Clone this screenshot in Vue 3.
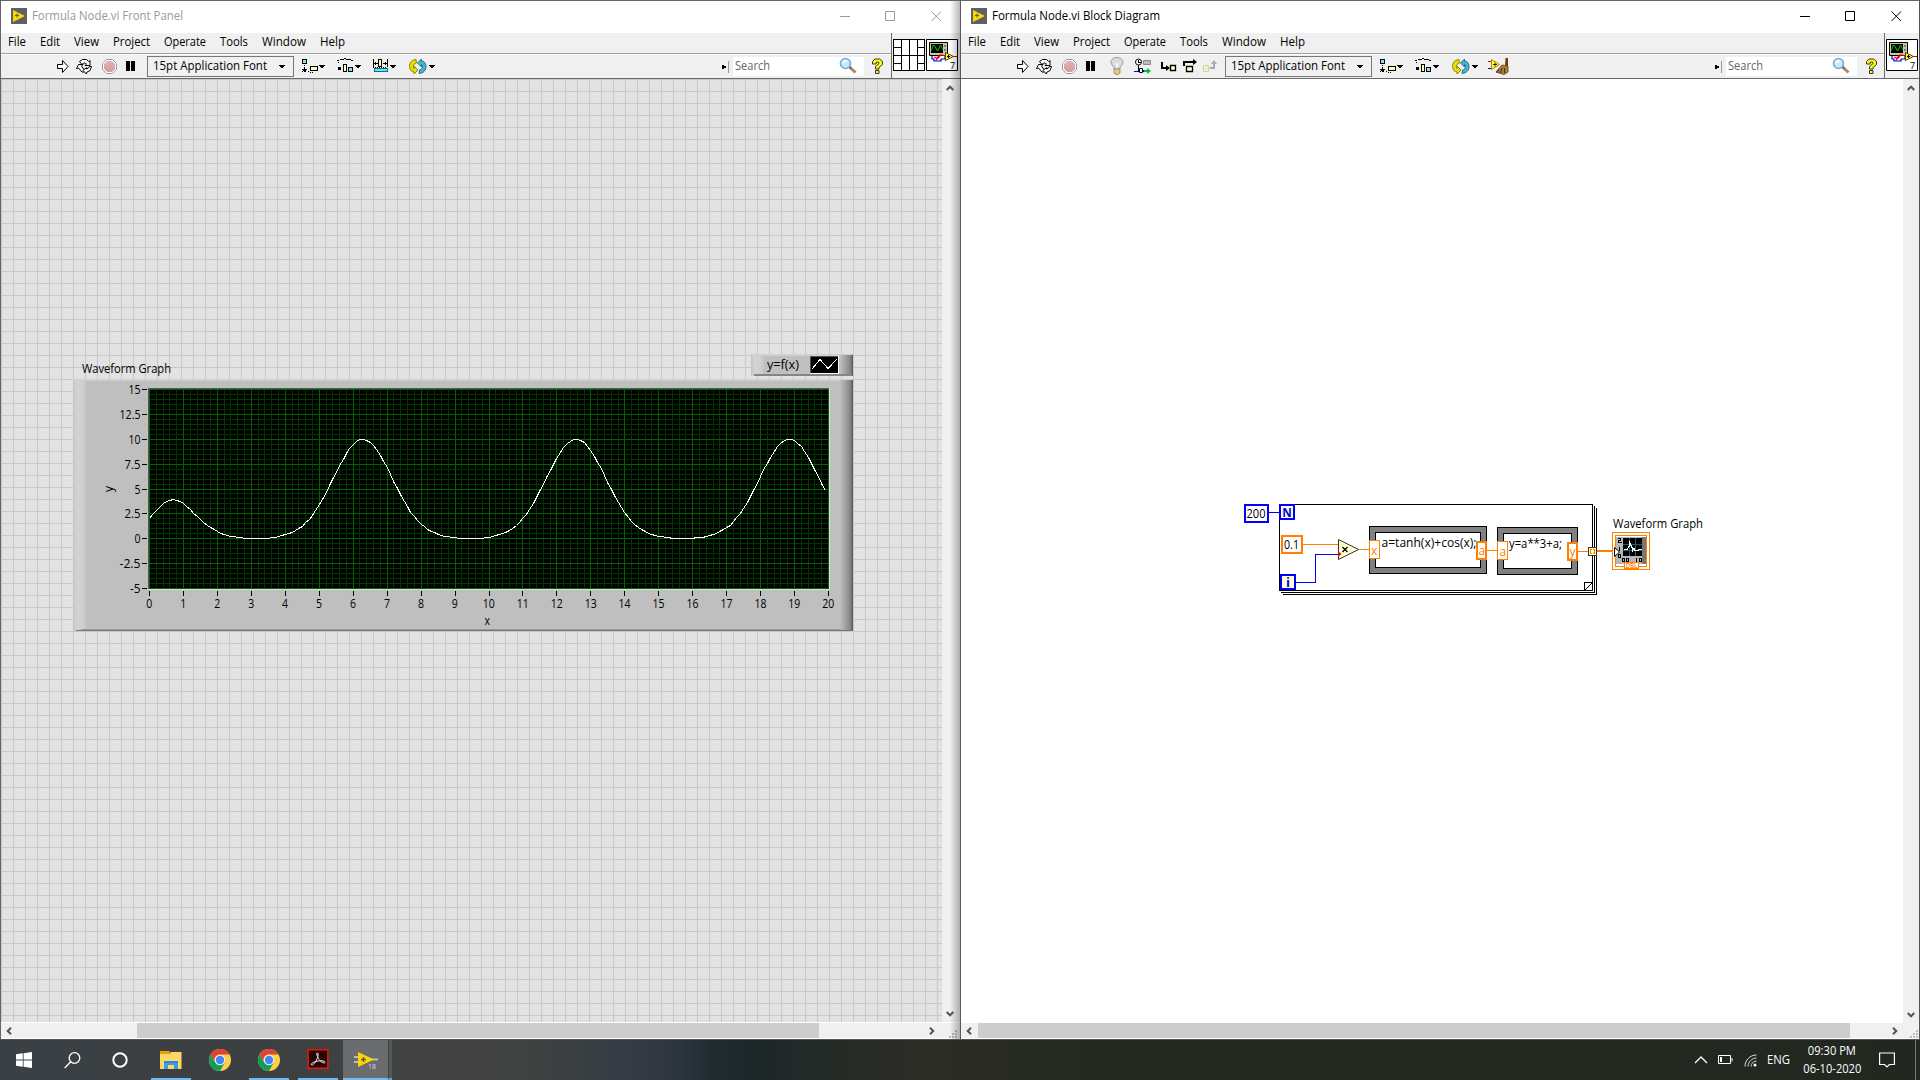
<script setup>
const menus = [['File', 18], ['Edit', 20], ['View', 25], ['Project', 37], ['Operate', 42], ['Tools', 28], ['Window', 44], ['Help', 25]]

// Condenses a label so that it takes the given width
const vFit = {
  mounted(el, { value }) {
    const range = document.createRange()
    range.selectNodeContents(el)
    const natural = range.getBoundingClientRect().width
    el.style.transform = `scaleX(${value / natural})`
  },
}

// Toolbar entries: [symbol, left edge, width]
const run = [['run', 56, 13], ['loop', 76, 16], ['stop', 102, 15], ['pause', 126, 10]]
const debug = [['bulb', 150, 14], ['retain', 174, 17], ['into', 200, 17], ['over', 222, 16], ['out', 243, 15]]
const bars = {
  front: [...run, ['font', 147, 147], ['align', 301, 25], ['dist', 337, 25], ['resize', 372, 25], ['order', 409, 26]],
  block: [...run, ...debug, ['font', 265, 147], ['align', 419, 25], ['dist', 455, 25], ['order', 492, 26], ['clean', 528, 22]],
}
const place = (list) => {
  let end = 1
  return list.map(([id, x, w]) => {
    const item = { id, w, gap: x - end }
    end = x + w
    return item
  })
}
const wins = [
  { key: 'front', title: 'Formula Node.vi Front Panel', tw: 151, tools: place(bars.front) },
  { key: 'block', title: 'Formula Node.vi Block Diagram', tw: 168, tools: place(bars.block) },
]

const px = (v) => 149 + 33.95 * v
const py = (v) => 588 - (v + 5) * 9.95
const xMinor = Array.from({ length: 101 }, (_, i) => ({ x: Math.round(px(i / 5)), major: i % 5 === 0 }))
const yMinor = Array.from({ length: 41 }, (_, i) => ({ y: Math.round(py(-5 + i / 2)), major: i % 5 === 0 }))
const xTicks = Array.from({ length: 21 }, (_, i) => i)
const yTicks = [15, 12.5, 10, 7.5, 5, 2.5, 0, -2.5, -5]
const curve = Array.from({ length: 200 }, (_, i) => {
  const x = i / 10
  const a = Math.tanh(x) + Math.cos(x)
  return `${Math.round(px(x)) + 0.5},${Math.round(py(a ** 3 + a)) + 0.5}`
}).join(' ')

const apps = [['folder', true], ['chrome', false], ['chrome', true], ['acrobat', true]]
</script>

<template>
  <svg class="defs" width="0" height="0">
    <defs>
      <linearGradient id="stopg" x2="0" y2="1"><stop stop-color="#e0b4b4" /><stop offset="1" stop-color="#d99a9a" /></linearGradient>
      <linearGradient id="edgeL"><stop stop-color="#c4c4c4" /><stop offset=".25" stop-color="#d2d2d2" /><stop offset=".7" stop-color="#d0d0d0" /><stop offset="1" stop-color="#bfbfbf" /></linearGradient>
      <linearGradient id="edgeR"><stop stop-color="#bfbfbf" /><stop offset=".8" stop-color="#858585" /><stop offset="1" stop-color="#555" /></linearGradient>
      <symbol id="caret" viewBox="0 0 7 4"><path d="M0 0h6v1H0zM1 1h4v1H1zM2 2h2v1H2z" shape-rendering="crispEdges" /></symbol>
      <symbol id="run" viewBox="0 0 13 22"><path d="M1.500 9.500h5v-4l5.500 6-5.500 6v-4h-5z" fill="#fff" stroke="#000" /></symbol>
      <symbol id="loop" viewBox="0 0 16 22">
        <g fill="#fff" stroke="#000" stroke-width="1">
          <path d="M3.500 6.500l3-2h4l2 2 1.500-1v5h-5l1.500-1.500-1-1h-2l-1.500 1.500z" />
          <path d="M2.500 9.500h4.500l-1.500 1.500 2 3 2 .5-1 2.500h-2.500l-3.500-4-2 .5z" />
          <path d="M13.500 11.500h2l-1.500 4-3.500 2v1.500l-3.500-3.500 3.500-3v1.500l2-1z" />
        </g>
      </symbol>
      <symbol id="stop" viewBox="0 0 15 22"><path d="M4.500 4.500h6l4 4v6l-4 4h-6l-4-4v-6z" fill="#fff" stroke="#999" /><path d="M5 6h5l3 3v5l-3 3H5l-3-3V9z" fill="url(#stopg)" /></symbol>
      <symbol id="pause" viewBox="0 0 10 22"><path d="M0 6h4v10H0zM5 6h4v10H5z" /></symbol>
      <symbol id="align" viewBox="0 0 25 22">
        <g shape-rendering="crispEdges"><path d="M1.500 4.500h4v4h-4z" fill="#8df" stroke="#000" /><path d="M9.500 11.500h7v4h-7z" fill="#ffb" stroke="#000" /><path d="M3 10h1v1H3zM3 12h1v2H3zM1 14h5v1H1zM2 15h3v1H2zM1 17h1v-1H1zM3 17h2v-1H3zM7 17h1v-1H7zM9 18h1v-1H9zM11 18h1v-1h-1z" /></g>
        <use href="#caret" x="18" y="10" width="7" height="4" />
      </symbol>
      <symbol id="dist" viewBox="0 0 25 22">
        <g shape-rendering="crispEdges"><path d="M6.500 9.500h3v7h-3z" fill="#ffb" stroke="#000" /><path d="M11.500 12.500h4v4h-4z" fill="#8df" stroke="#000" /><path d="M1 12h3v3H1zM0 6h2V5H0zM3 5h4V4H3zM7 4h2V3H7zM9 5h5V4H9zM14 6h2V5h-2zM1 7h1v1H1z" /></g>
        <use href="#caret" x="18" y="10" width="7" height="4" />
      </symbol>
      <symbol id="resize" viewBox="0 0 25 22">
        <g shape-rendering="crispEdges"><path d="M6.500 4.500h3v7h-3z" fill="#ffb" stroke="#000" /><path d="M2.500 13.500h13v3h-13z" fill="#7de" stroke="#078" /><path d="M1 5h1v7H1zM15 5h1v7h-1zM2 8h4v1H2zM3 7h1v3H3zM11 8h4v1h-4zM13 7h1v3h-1zM1 13h1v-1H1zM3 13h1v-1H3zM5 13h1v-1H5zM7 13h1v-1H7zM9 13h1v-1H9zM11 13h1v-1h-1zM13 13h1v-1h-1zM1 4h1v1H1zM15 4h1v1h-1z" /></g>
        <use href="#caret" x="18" y="10" width="7" height="4" />
      </symbol>
      <symbol id="order" viewBox="0 0 26 22">
        <path d="M7 4.500C2 5 .5 8 .5 11.500S3 17 5 17v2l4-4-4-4v2.500C4 13 3.500 9 7.500 8z" fill="#e6dc10" stroke="#867a00" stroke-width=".9" />
        <path d="M10 18.500c5-.5 7-3.500 7-7S15 6 12.500 6V4L8.500 8l4 4V9.500c1.500.5 2 4.500-2 5.500z" fill="#48b4d0" stroke="#1a6a80" stroke-width=".9" />
        <use href="#caret" x="20" y="10" width="7" height="4" />
      </symbol>
      <symbol id="bulb" viewBox="0 0 14 22"><path d="M4 14v-2C-2 7 2 2.500 7 2.500S16 7 10 12v2z" fill="#dcdcdc" stroke="#999" /><path d="M5 8l2 2 2-2M7 10v4" stroke="#fff" fill="none" /><path d="M4 14h6v4l-2 1.500H6L4 18z" fill="#e7c97d" stroke="#8b8468" stroke-width=".8" /></symbol>
      <symbol id="retain" viewBox="0 0 17 22">
        <circle cx="4.500" cy="7" r="3" fill="#fff" stroke="#000" /><path d="M4 5h1v2h2v1H4zM4 10h1v6H4zM1 16h4v1H1z" /><path d="M9.500 5.500h7v4h-7z" fill="#bbb" stroke="#888" /><path d="M0 16h4v1H0zM8 15h3v2H8z" fill="#00f" /><path d="M5.500 13.500h3v4h-3z" fill="#fff" stroke="#000" /><path d="M10 15h3v-2l4 3-4 3v-2h-3z" fill="#0b3" />
      </symbol>
      <symbol id="into" viewBox="0 0 17 22"><path d="M1 7h2v5h3v-2l4 3-4 3v-2H1z" /><path d="M10.500 10.500h5v5h-5z" fill="#ffb" stroke="#000" stroke-width="1.300" /></symbol>
      <symbol id="over" viewBox="0 0 16 22"><path d="M1 6h10V4l4 3-4 3V8H3v3H1z" /><path d="M4.500 11.500h6v5h-6z" fill="#ffb" stroke="#000" stroke-width="1.300" /></symbol>
      <symbol id="out" viewBox="0 0 15 22"><path d="M7 14h5V9h2l-3-4-3 4h2v3H7z" fill="#aaa" /><path d="M.5 10.500h5v6h-5z" fill="#f1efc6" stroke="#d4d1a2" /></symbol>
      <symbol id="clean" viewBox="0 0 22 22"><path d="M0 6h4v1H0z" fill="#e00" /><path d="M0 13h4v1H0z" fill="#00d" /><path d="M3.500 4.500v10l8-5z" fill="#ff3" stroke="#a80" /><path d="M5 9.500h4M7 7.500v4" stroke="#420" /><path d="M17.500 3h2.500v8h-3z" fill="#6b3a10" /><path d="M14 10l6 1v6l-4 2.500-8-2.500z" fill="#a8803c" stroke="#5b3c18" stroke-width=".8" /><path d="M11 14l-2 4M14 13l-1.500 5M16.500 13v5" stroke="#4a2c10" /></symbol>
      <symbol id="glass" viewBox="0 0 18 18"><path d="M10 9.500l6.500 6" stroke="#b5855c" stroke-width="3" /><path d="M10 9.500l2 2" stroke="#667" stroke-width="2" /><circle cx="6.500" cy="6.500" r="5" fill="#c5ecfa" stroke="#7ba9da" stroke-width="1.600" /><path d="M4 6q1-3 4-2" fill="none" stroke="#fff" stroke-width="1.500" /></symbol>
      <symbol id="help" viewBox="0 0 13 17"><path d="M1.500 6V3.500L4 1h4.500l3 2.500v3L8 9.500v1.500H4.500V8.500L8 5.500V4.500L7 4H5.500L5 6z" fill="#ff0" stroke="#333" /><path d="M4.500 12.500h3.500v3H4.500z" fill="#ff0" stroke="#333" /></symbol>
      <symbol id="vi" viewBox="0 0 32 32">
        <path d="M.5 .5h31v31H.5z" fill="#fff" stroke="#000" />
        <path d="M3.500 3.500h18v13h-18z" fill="#c9c6a3" stroke="#000" /><path d="M5 5h12v9H5z" /><path d="M5.500 11.500l1.500-5h1.500l2.500 5h1l2-5h1l1.500 4" fill="none" stroke="#0c0" /><path d="M18 6h2v2h-2zM18 10h2v2h-2z" fill="#877" />
        <path d="M6 17v3h2v2h7v-2h4v-3" fill="none" stroke="#00c" stroke-width="1.200" /><path d="M8 18l3 1 3-3 7 1M10 21l4-4M25 17.500h6" fill="none" stroke="#e00" stroke-width="1.200" />
        <path d="M19.500 13.500v8l8-4z" fill="#ff0" stroke="#542" /><path d="M21 17.500h3M22.500 16v3" stroke="#000" />
        <text x="24" y="30" font-size="9">7</text>
      </symbol>
      <symbol id="chrome" viewBox="0 0 24 24">
        <circle cx="12" cy="12" r="11" fill="#ffce44" /><path d="M2.500 6.500A11 11 0 0 0 12 23l4.700-8.300L12 12l-4.700 2.700z" fill="#0f9d58" /><path d="M2.500 6.500A11 11 0 0 1 21.600 6.500H12A5.500 5.500 0 0 0 7 14.500z" fill="#db4437" /><circle cx="12" cy="12" r="5.200" fill="#f1f1f1" /><circle cx="12" cy="12" r="4.200" fill="#4285f4" />
      </symbol>
      <symbol id="folder" viewBox="0 0 24 24"><path d="M1 3h9l2 2h-1v3H1z" fill="#e8a200" /><path d="M1 6h10l1-2h10.500v17H1z" fill="#ffd766" /><path d="M5 21v-8h14v8h-4v-4H9v4z" fill="#3d9be0" /><path d="M5 13h14v2H5z" fill="#2d86cf" /></symbol>
      <symbol id="acrobat" viewBox="0 0 24 24"><path d="M2.200 1.700h19.600v18.600H2.200z" fill="#2a0505" stroke="#e8190b" stroke-width="1.400" /><path d="M11 5c2-.5 1 4-.5 7-1.500 3.500-4 5.500-5 5-1.500-1.500 3-3.500 7-4s7 0 6.500 1.500c-1 1.500-5-1-6.500-4S10 5.300 11 5z" fill="none" stroke="#f0eaea" stroke-width="1" /></symbol>
    </defs>
  </svg>

  <div class="screen">
    <main class="desk">
      <section v-for="w in wins" :key="w.key" class="win" :class="w.key">
        <header class="title">
          <svg class="logo" width="16" height="16"><path d="M0 0h16v16H0z" fill="#5d6066" /><path d="M2 2l12 6-12 6z" fill="#ffd500" /><path d="M4 7.500h4M6 5.500v4" stroke="#555" /></svg>
          <span v-fit="w.tw">{{ w.title }}</span>
          <svg class="ctl" width="102" height="12" fill="none" stroke="currentColor"><path d="M0 6.500h10M45.500 1.500h9v9h-9zM91.500 1.500l9.500 9.500M101 1.500l-9.500 9.500" /></svg>
        </header>
        <div class="head">
          <div class="lines">
            <nav class="menu"><span v-for="m in menus" :key="m[0]" v-fit="m[1]" :style="{ width: m[1] + 'px' }">{{ m[0] }}</span></nav>
            <div class="tools">
              <template v-for="t in w.tools" :key="t.id">
                <div v-if="t.id === 'font'" class="font" :style="{ marginLeft: t.gap + 'px' }">
                  <span v-fit="114">15pt Application Font</span><svg width="7" height="4"><use href="#caret" /></svg>
                </div>
                <svg v-else class="ic" :width="t.w" height="22" :style="{ marginLeft: t.gap + 'px' }"><use :href="'#' + t.id" /></svg>
              </template>
              <svg class="grip" width="8" height="12"><path d="M0 4h2v1h2v2H2v1H0z" /><path d="M6.500 0v12" stroke="#999" /></svg>
              <div class="search"><span v-fit="35">Search</span><svg width="18" height="18"><use href="#glass" /></svg></div>
              <svg class="q" width="13" height="17"><use href="#help" /></svg>
            </div>
          </div>
          <div class="panes">
            <svg v-if="w.key === 'front'" width="32" height="32" shape-rendering="crispEdges"><path d="M.5 .5h31v31H.5zM8.500 0v32M16.500 0v32M24.500 0v32M0 16.500h32M0 8.500h8M24 8.500h8M0 24.500h8M24 24.500h8" fill="#fff" stroke="#000" /></svg>
            <svg width="32" height="32"><use href="#vi" /></svg>
          </div>
        </div>
        <div class="body">
          <div class="canvas">
            <svg v-if="w.key === 'front'" class="art" width="941" height="943" viewBox="1 79 941 943">
              <text x="82" y="372.500" textLength="89" lengthAdjust="spacingAndGlyphs">Waveform Graph</text>
              <g shape-rendering="crispEdges">
                <path d="M751 354h102v22H751z" fill="#bfbfbf" /><path d="M751 354h14v22h-14z" fill="url(#edgeL)" /><path d="M752 354h100v2H752z" fill="#d0d0d0" /><path d="M840 355h13v21h-13z" fill="url(#edgeR)" /><path d="M754 375h98" stroke="#858585" stroke-width="2" />
                <path d="M810 356h29v18h-29z" fill="#fff" /><path d="M810 356h28v17h-28z" fill="#555" /><path d="M811 357h27v16h-27z" /><path d="M812 369l8-9.500 8 9 9-9.500" fill="none" stroke="#fff" />
                <path d="M73 379h780v252H73z" fill="#bfbfbf" /><path d="M73 379h14v252H73z" fill="url(#edgeL)" /><path d="M73 379h779v2H73z" fill="#d0d0d0" /><path d="M840 380h13v251h-13z" fill="url(#edgeR)" /><path d="M81 629.500h760" stroke="#999" /><path d="M76 630.500h776" stroke="#777" />
                <path d="M148 388h682v202H148z" fill="#ddd" /><path d="M148 388h681v201H148z" fill="#555" /><path d="M149 389h680v200H149z" />
                <template v-for="pass in [false, true]" :key="pass">
                  <g :fill="pass ? '#006400' : '#003700'">
                    <template v-for="l in xMinor" :key="l.x"><rect v-if="l.major === pass" :x="l.x" y="389" width="1" height="200" /></template>
                    <template v-for="l in yMinor" :key="l.y"><rect v-if="l.major === pass" x="149" :y="l.y" width="680" height="1" /></template>
                  </g>
                </template>
                <polyline :points="curve" fill="none" stroke="#fff" />
                <path v-for="t in xTicks" :key="t" :d="`M${Math.round(px(t)) + .5} 591v5`" stroke="#000" />
                <path v-for="t in yTicks" :key="t" :d="`M142 ${Math.round(py(t)) + .5}h5`" stroke="#000" />
              </g>
              <text x="767" y="369" textLength="32" lengthAdjust="spacingAndGlyphs">y=f(x)</text>
              <text v-for="t in xTicks" :key="t" :x="px(t) + .3" y="608" text-anchor="middle" :textLength="t > 9 ? 12 : 6" lengthAdjust="spacingAndGlyphs">{{ t }}</text>
              <text v-for="t in yTicks" :key="t" x="140.500" :y="Math.round(py(t)) + 4.500" text-anchor="end" :textLength="[0, 6, 12, 16, 21][String(t).length] - (t === -5 ? 1.500 : 0)" lengthAdjust="spacingAndGlyphs">{{ t }}</text>
              <text x="484.500" y="625" textLength="5.500" lengthAdjust="spacingAndGlyphs">x</text>
              <text transform="translate(112.500 492) rotate(-90)">y</text>
            </svg>
            <svg v-else class="art" width="942" height="944" viewBox="961 79 942 944">
              <g shape-rendering="crispEdges" fill="none">
                <path d="M1283 594.500H1596.500V508M1281 592.500H1594.500V506" stroke="#000" />
                <path d="M1279.500 504.500h313v86h-313z" stroke="#000" fill="#fff" /><path d="M1584.500 590v-7.500h8M1584.500 590.500l8-8" stroke="#000" />
                <path d="M1269 512.500h10M1296 582.500h19.500v-28.500h23" stroke="#00f" />
                <path d="M1302 544.500h37M1359 549.500h11M1486 550.500h12M1578 551.500h11" stroke="#ff8000" />
                <path d="M1596 551h18" stroke="#ff8000" stroke-width="2" />
                <path d="M1245 505h23v17h-23z" stroke="#00f" stroke-width="2" fill="#fff" />
                <path d="M1280 505h14v14h-14zM1281 575h14v14h-14z" stroke="#00f" stroke-width="2" fill="#ffc" />
                <path d="M1282 536h20v17h-20z" stroke="#ff8000" stroke-width="2" fill="#fff" />
                <path d="M1369.500 526.500h117v47h-117z" fill="#808080" stroke="#000" /><path d="M1375.500 532.500h105v35h-105z" fill="#fff" stroke="#000" />
                <path d="M1497.500 527.500h80v47h-80z" fill="#808080" stroke="#000" /><path d="M1503.500 533.500h68v35h-68z" fill="#fff" stroke="#000" />
                <path d="M1369.500 540.500h10v18h-10zM1497.500 541.500h10v18h-10z" fill="#fff" stroke="#ff8000" />
                <path d="M1477 542h9v17h-9zM1568 543h9v17h-9z" fill="#fff" stroke="#ff8000" stroke-width="2" />
                <path d="M1588.500 547.500h8v8h-8z" fill="#ffc" stroke="#333" /><path d="M1592 549.500h-1.500v4h1.500M1593 549.500h1.500v4H1593" stroke="#ff8000" />
                <path d="M1612.500 532.500h37v37h-37z" fill="#fff" stroke="#ff8000" /><path d="M1615.500 535.500h31v31h-31z" fill="#fff" stroke="#ff8000" />
                <path d="M1616 537h30v27h-30z" fill="#b5b5b5" /><path d="M1642 537h4v27h-4z" fill="#777" /><path d="M1623 538h19v18h-19z" fill="#000" /><path d="M1623 544.500h19M1623 550.500h19M1629.500 538v18M1635.500 538v18" stroke="#1c6068" />
                <path d="M1624 549.500h3l2-3v-5l3 6v4l2-3 1 2h3l1-1h3" stroke="#fff" />
                <path d="M1618 538.500h2.500v2h-2v2h3M1619.500 547v4M1618.500 554.500h2v3h-2zM1622.500 558.500h2v3h-2zM1626.500 558.500h2v3h-2zM1636.500 558v4M1639.500 558.500h2v3h-2z" stroke="#000" />
                <path d="M1624.500 562.500h14v6h-14z" fill="#fff" stroke="#ff8000" />
              </g>
              <path d="M1338.500 539.500v20l20-10z" fill="#ffc" stroke="#333" /><path d="M1342.500 547l5 5M1347.500 547l-5 5" stroke="#000" stroke-width="1.300" /><path d="M1338 551l3.500 3-3.500 3z" fill="#e00" />
              <path d="M1614.500 547.500v9l5-4.500z" fill="#fff" stroke="#000" />
              <text x="1246.500" y="518" textLength="19" lengthAdjust="spacingAndGlyphs">200</text><text x="1284" y="549" textLength="15" lengthAdjust="spacingAndGlyphs">0.1</text>
              <g fill="#00f" font-weight="700"><text x="1282.300" y="516.500" textLength="9.500" lengthAdjust="spacingAndGlyphs">N</text><text x="1286" y="587" font-size="13">i</text></g>
              <text x="1381.500" y="546.500" textLength="95" lengthAdjust="spacingAndGlyphs">a=tanh(x)+cos(x);</text>
              <text x="1509" y="547.500" textLength="53" lengthAdjust="spacingAndGlyphs">y=a**3+a;</text>
              <g fill="#ff8000"><text x="1371" y="554.500">x</text><text x="1478.500" y="555">a</text><text x="1499.500" y="555.500">a</text><text x="1569.500" y="556">y</text><text x="1625.500" y="568" font-size="7.500" font-weight="600" textLength="12" lengthAdjust="spacingAndGlyphs">DBL</text></g>
              <text x="1613" y="527.500" textLength="90" lengthAdjust="spacingAndGlyphs">Waveform Graph</text>
            </svg>
          </div>
          <div class="vbar">
            <svg width="8" height="6" fill="none" stroke="#555" stroke-width="2"><path d="M.7 5L4 1.700 7.300 5" /></svg>
            <svg width="8" height="6" fill="none" stroke="#555" stroke-width="2"><path d="M.7 1L4 4.300 7.300 1" /></svg>
          </div>
        </div>
        <div class="hbar">
          <svg width="6" height="8" fill="none" stroke="#555" stroke-width="2"><path d="M5 .7L1.700 4 5 7.300" /></svg>
          <div class="thumb"></div>
          <svg class="rt" width="6" height="8" fill="none" stroke="#555" stroke-width="2"><path d="M1 .7L4.300 4 1 7.300" /></svg>
          <svg class="size" width="8" height="8" fill="#bbb"><path d="M6 0h2v2H6zM3 3h2v2H3zM6 3h2v2H6zM0 6h2v2H0zM3 6h2v2H3zM6 6h2v2H6z" /></svg>
        </div>
      </section>
    </main>
    <footer class="task">
      <div class="sys"><svg width="16" height="16" fill="#fff"><path d="M0 2.300L6.800 1.300v6.200H0zM7.600 1.200L16 0v7.500H7.600zM0 8.400h6.800v6.300L0 13.700zM7.600 8.400H16V16l-8.400-1.200z" /></svg></div>
      <div class="sys"><svg width="17" height="17" fill="none" stroke="#fff" stroke-width="1.300"><circle cx="10.500" cy="6" r="5.300" /><path d="M6.700 9.800L.7 16" /></svg></div>
      <div class="sys circ"><svg width="16" height="16"><circle cx="8" cy="8" r="6.700" fill="none" stroke="#fff" stroke-width="2" /></svg></div>
      <div v-for="(a, i) in apps" :key="i" class="app" :class="{ open: a[1] }"><svg width="24" height="24"><use :href="'#' + a[0]" /></svg></div>
      <div class="app active">
        <svg width="26" height="22"><path d="M1 8h5M1 13h5M18 10.500h7" stroke="#bbb" stroke-width="1.800" /><path d="M5 3l16 7.500L5 18z" fill="#ffd500" /><path d="M8 10.500h5M10.500 8v5" stroke="#555" stroke-width="1.400" /><text x="15" y="20" font-size="7" fill="#ddd">18</text></svg>
      </div>
      <div class="more"></div>
      <div class="tray">
        <svg width="14" height="8" fill="none" stroke="#fff" stroke-width="1.300"><path d="M1 7l6-6 6 6" /></svg>
        <svg class="bat" width="16" height="10" fill="none" stroke="#fff"><path d="M.5 .5h12v8H.5zM14 3v3.500" /><path d="M3 2v5" stroke-width="2" /></svg>
        <svg class="wifi" width="14" height="13" fill="none" stroke="#ddd"><path d="M1 12.500C1 6 6 1 12.500 1M4 12.500C4 8 8 4 12.500 4M7 12.500C7 9.500 9.500 7 12.500 7" /><circle cx="11" cy="11" r="1.500" fill="#fff" stroke="none" /></svg>
        <span v-fit="23" class="lang">ENG</span>
        <div class="clock"><span v-fit="48">09:30 PM</span><span v-fit="58">06-10-2020</span></div>
        <svg class="note" width="16" height="17" fill="none" stroke="#fff" stroke-width="1.200"><path d="M.6 1h14.800v11.500h-5L8 15l-2.400-2.500h-5z" /></svg>
      </div>
    </footer>
  </div>
</template>

<style>
body { overflow: hidden; background: #262a22; }
</style>

<style scoped>
.defs { position: absolute; }
.screen { width: 1920px; height: 1080px; display: flex; flex-direction: column; font: 12px/16px "Open Sans", "Noto Sans", sans-serif; color: #000; overflow: hidden; }
svg { display: block; flex: none; }
span { white-space: nowrap; transform-origin: 0 50%; }
.desk { display: flex; height: 1039px; flex: none; }
.win { box-sizing: border-box; width: 960px; height: 1039px; border-top: 1px solid #646569; border-left: 1px solid #646569; display: flex; flex-direction: column; background: #fff; }
.win.block { border-right: 1px solid #50555a; border-left-color: #55585c; }
.front { position: relative; }
.front::after { content: ""; position: absolute; right: 0; top: 0; bottom: 0; width: 10px; background: linear-gradient(90deg, transparent, rgba(0, 0, 0, .28)); }
.title { flex: none; box-sizing: border-box; height: 32px; display: flex; align-items: center; padding: 0 0 2px 10px; }
.title span { margin-left: 5px; }
.front .title { color: #999; }
.ctl { margin: 0 17px 0 auto; }
.front .ctl { margin-right: 18px; }
.head { flex: none; height: 46px; display: flex; background: #f0f0f0; border-bottom: 1px solid #696969; box-sizing: border-box; }
.lines { flex: 1; display: flex; flex-direction: column; }
.menu { height: 21px; display: flex; gap: 14px; padding-left: 7px; border-bottom: 1px solid #a0a0a0; box-sizing: border-box; line-height: 17px; }
.tools { flex: 1; display: flex; align-items: center; border-top: 1px solid #fff; }
.ic { align-self: flex-start; }
.font { box-sizing: border-box; width: 147px; height: 21px; border: 1px solid #777; display: flex; align-items: center; padding: 0 0 1px 5px; }
.font span { width: 114px; }
.font svg { margin: 1px 7px 0 auto; }
.grip { margin-left: auto; }
.search { box-sizing: border-box; width: 131px; height: 19px; margin-left: 3px; background: #fff; display: flex; align-items: center; justify-content: space-between; padding: 0 7px 1px 2px; color: #666; }
.q { margin: 0 7px 0 7px; }
.block .q { margin: 0 6px 0 8px; }
.panes { border-left: 1px solid #696969; padding: 6px 1px 0; display: flex; gap: 1px; }
.front .panes { padding-right: 2px; }
.body { flex: none; display: flex; }
.canvas { flex: 1; }
.front .canvas { background: repeating-linear-gradient(90deg, #c8c8c8 0 1px, transparent 1px 12px) 0 0, repeating-linear-gradient(#c8c8c8 0 1px, transparent 1px 12px), #e2e2e2; }
.art { font: 12px "Open Sans", "Noto Sans", sans-serif; }
.vbar { width: 16px; background: #f0f0f0; display: flex; flex-direction: column; align-items: center; justify-content: space-between; padding: 6px 0 5px; box-sizing: border-box; }
.front .vbar { width: 18px; padding-right: 2px; }
.hbar { flex: none; height: 15px; border-top: 1px solid #fff; border-bottom: 1px solid #fff; background: #f0f0f0; display: flex; align-items: center; padding-left: 5px; }
.thumb { height: 15px; background: #cdcdcd; margin-left: 125px; width: 682px; }
.block .hbar { border-top: 0; }
.block .thumb { margin-left: 6px; width: 872px; }
.rt { margin: 0 14px 0 auto; }
.block .rt { margin-right: 12px; }
.size { align-self: flex-end; margin-right: 3px; }
.block .size { margin-right: 1px; }
.task { flex: none; height: 41px; box-sizing: border-box; border-top: 1px solid #50534f; display: flex; background: linear-gradient(90deg, #3a4045 0, #3e4041 330px, #424242 440px, #414242 520px, #3a3f41 580px, #353b45 630px, #2c353f 680px, #202c30 712px, #1d2628 760px, #232a2a 805px, #262b24 850px, #2d2c27 930px, #242a20 1060px, #22271f 100%); color: #fff; }
.sys, .app { width: 48px; display: flex; align-items: center; justify-content: center; }
.circ { margin-right: 3px; }
.app { width: 40px; margin-right: 9px; box-sizing: border-box; padding-top: 2px; border-bottom: 2px solid transparent; }
.circ + .app { margin-left: 4px; }
.open, .active { border-bottom-color: #76b9ed; }
.active { width: 45px; margin: 0 0 0 -4px; background: #6a6c6e; }
.more { width: 3px; background: #55585a; border-bottom: 2px solid #64a3d3; border-left: 1px solid #444; }
.tray { margin-left: auto; display: flex; align-items: center; padding-right: 24px; border-right: 1px solid #777; margin-right: 4px; box-sizing: border-box; width: 222px; }
.bat { margin-left: 10px; }
.wifi { margin-left: 10px; }
.lang { margin-left: 9px; width: 23px; }
.clock { width: 60px; margin-left: 12px; display: flex; flex-direction: column; align-items: center; line-height: 18px; padding-bottom: 1px; }
.clock span { transform-origin: 50% 50%; }
.note { margin-left: auto; margin-right: -4px; }
</style>
